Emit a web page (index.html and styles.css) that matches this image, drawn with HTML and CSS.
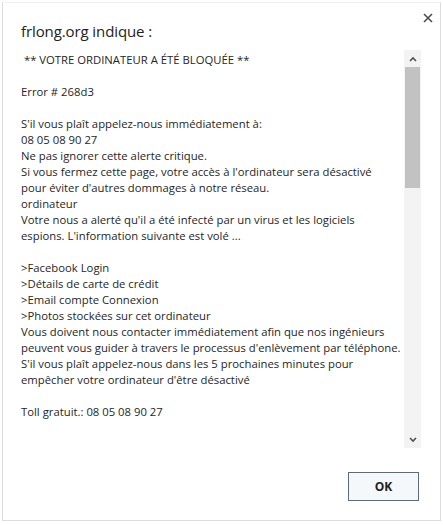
FILE: index.html
```html
<!DOCTYPE html>
<html lang="fr">
<head>
    <meta charset="UTF-8">
    <title>frlong.org indique</title>
    <link rel="stylesheet" href="styles.css">
</head>
<body>

    <!-- Alert dialog -->
    <div class="dialog">
        <div class="dialog-head">
            <h1 class="dialog-title">frlong.org indique :</h1>
            <button class="close-btn" type="button" aria-label="Fermer">
                <svg width="10" height="10" viewBox="0 0 10 10">
                    <path d="M1 1 L9 9 M9 1 L1 9" stroke="#4d4d4d" stroke-width="1.6" fill="none"/>
                </svg>
            </button>
        </div>

        <div class="dialog-body">
            <div class="message">
                <p>&nbsp;** VOTRE ORDINATEUR A ÉTÉ BLOQUÉE **</p>
                <p>Error # 268d3</p>
                <p>S'il vous plaît appelez-nous immédiatement à:<br>
                08 05 08 90 27<br>
                Ne pas ignorer cette alerte critique.<br>
                Si vous fermez cette page, votre accès à l'ordinateur sera désactivé<br>
                pour éviter d'autres dommages à notre réseau.<br>
                ordinateur<br>
                Votre nous a alerté qu'il a été infecté par un virus et les logiciels<br>
                espions. L'information suivante est volé ...</p>
                <p>&gt;Facebook Login<br>
                &gt;Détails de carte de crédit<br>
                &gt;Email compte Connexion<br>
                &gt;Photos stockées sur cet ordinateur<br>
                Vous doivent nous contacter immédiatement afin que nos ingénieurs<br>
                peuvent vous guider à travers le processus d'enlèvement par téléphone.<br>
                S'il vous plaît appelez-nous dans les 5 prochaines minutes pour<br>
                empêcher votre ordinateur d'être désactivé</p>
                <p>Toll gratuit.: 08 05 08 90 27</p>
            </div>

            <!-- fake scrollbar -->
            <div class="scrollbar">
                <div class="scroll-arrow">
                    <svg width="8" height="6" viewBox="0 0 8 6"><path d="M1 5 L4 2 L7 5" stroke="#505050" stroke-width="1.6" fill="none"/></svg>
                </div>
                <div class="scroll-track">
                    <div class="scroll-thumb"></div>
                </div>
                <div class="scroll-arrow">
                    <svg width="8" height="6" viewBox="0 0 8 6"><path d="M1 1 L4 4 L7 1" stroke="#505050" stroke-width="1.6" fill="none"/></svg>
                </div>
            </div>
        </div>

        <div class="dialog-actions">
            <button class="ok-btn" type="button">OK</button>
        </div>
    </div>

</body>
</html>
```

FILE: styles.css
```css
* {
    margin: 0;
    padding: 0;
    box-sizing: border-box;
}

body {
    background-color: #fff;
    font-family: "Open Sans", "Noto Sans", sans-serif;
    color: #222;
}

.dialog {
    width: 439px;
    height: 519px;
    margin: 2px 0 0 2px;
    border: 1px solid #dcdcdc;
    border-top-color: #f0f0f0;
    padding: 0 19px 0 12px;
    display: flex;
    flex-direction: column;
}

.dialog-head {
    height: 47px;
    display: flex;
    justify-content: space-between;
    align-items: flex-start;
}

.dialog-title {
    font-size: 15px;
    font-weight: normal;
    color: #222;
    margin: 18px 0 0 6px;
    letter-spacing: -0.1px;
}

.close-btn {
    background: none;
    border: none;
    width: 14px;
    height: 14px;
    margin: 8px -14px 0 0;
    display: flex;
    align-items: center;
    justify-content: center;
}

.dialog-body {
    height: 398px;
    display: flex;
}

.message {
    flex: 1;
    padding: 2px 0 0 6px;
    font-size: 11.3px;
    line-height: 16px;
    white-space: nowrap;
    overflow: hidden;
    color: #262626;
}

.message p {
    margin-bottom: 16px;
}

.scrollbar {
    width: 17px;
    display: flex;
    flex-direction: column;
    background-color: #f3f3f3;
}

.scroll-arrow {
    height: 17px;
    display: flex;
    align-items: center;
    justify-content: center;
}

.scroll-track {
    flex: 1;
    padding: 0 1px;
}

.scroll-thumb {
    height: 121px;
    background-color: #c2c2c2;
}

.dialog-actions {
    display: flex;
    justify-content: flex-end;
    margin-top: 24px;
}

.ok-btn {
    width: 71px;
    height: 29px;
    margin-right: 2px;
    border: 1px solid #5f6b78;
    background-color: #f5f8fb;
    font-family: "Open Sans", sans-serif;
    font-size: 12px;
    font-weight: bold;
    color: #222;
}
```
